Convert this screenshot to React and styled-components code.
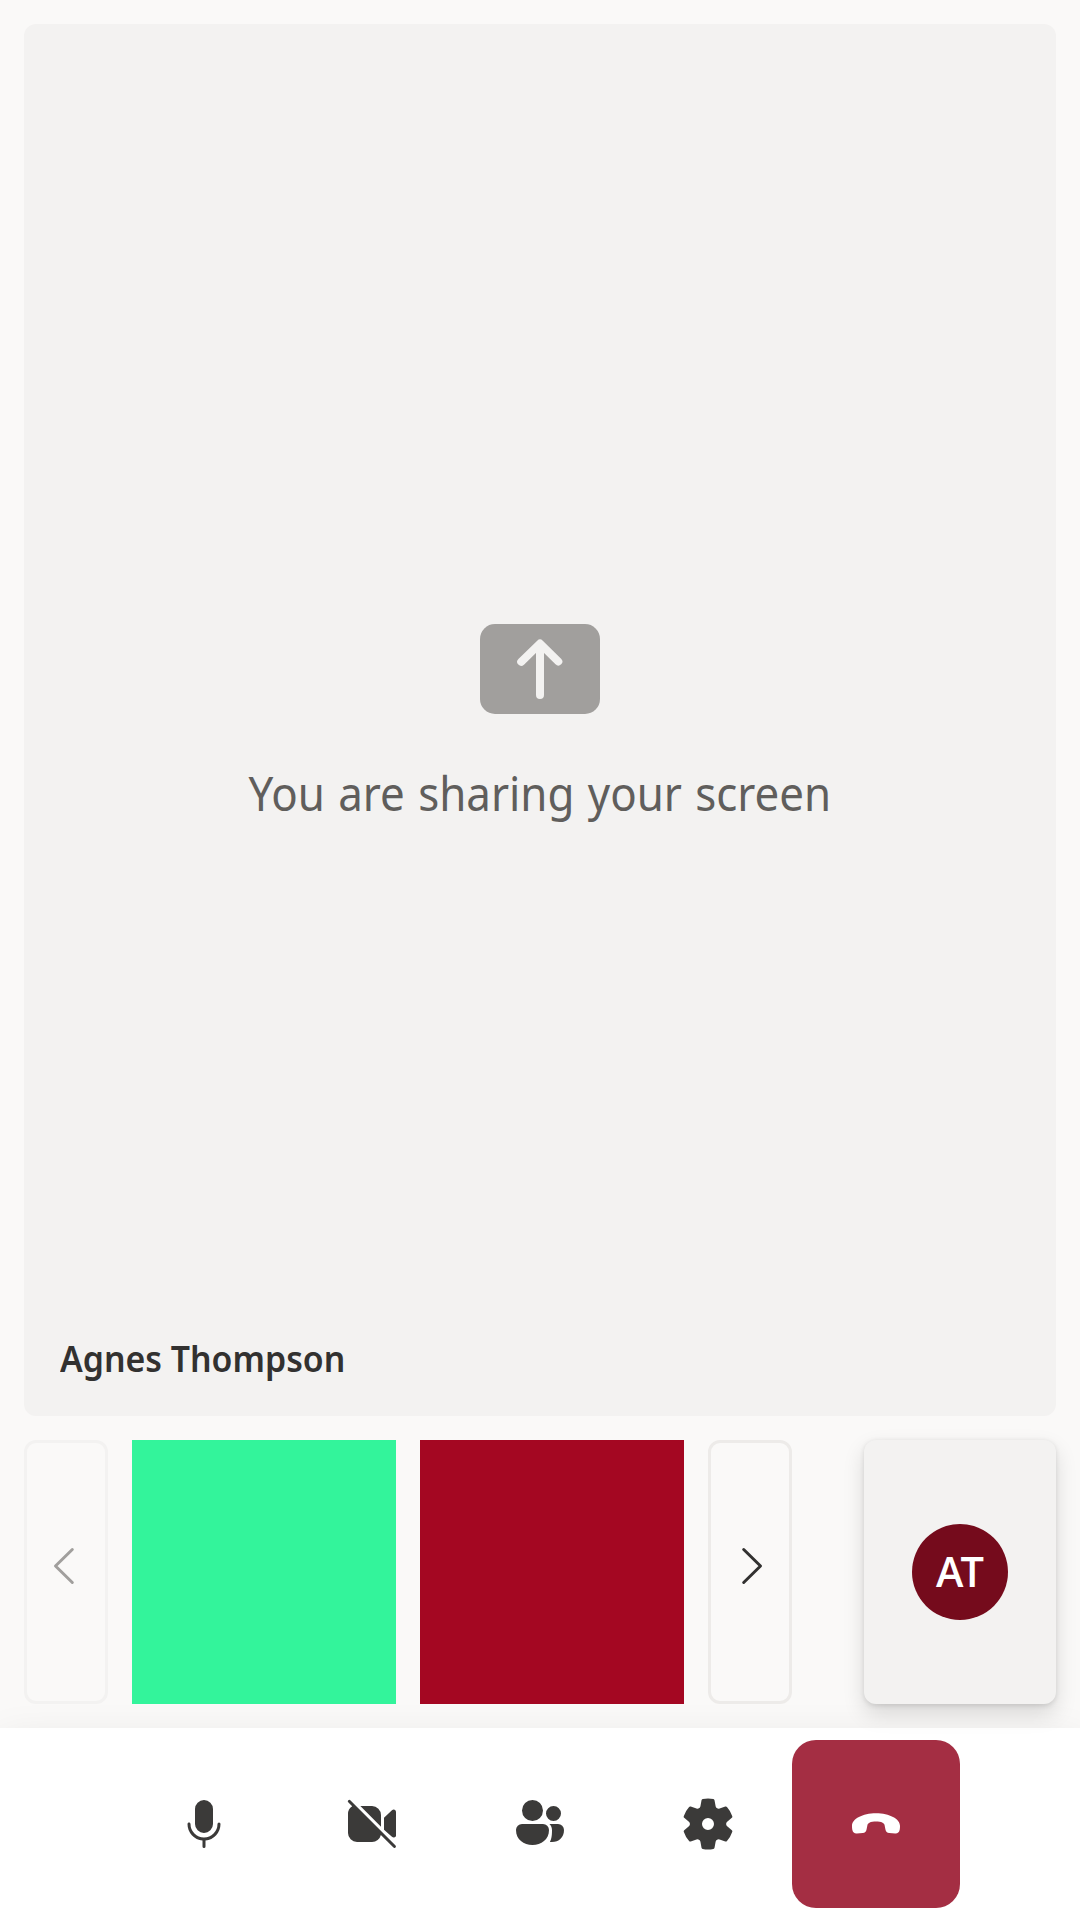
import React from "react";
import styled, { createGlobalStyle } from "styled-components";

const GlobalStyle = createGlobalStyle`
  *, *::before, *::after { box-sizing: border-box; }
  body {
    margin: 0;
    background: #faf9f8;
    font-family: "Noto Sans", "Open Sans", sans-serif;
  }
`;

const Screen = styled.main`
  width: 1080px;
  height: 1920px;
  display: flex;
  flex-direction: column;
  overflow: hidden;
  background: #faf9f8;
`;

const Content = styled.section`
  flex: 1;
  min-height: 0;
  padding: 24px;
  display: flex;
  flex-direction: column;
  gap: 24px;
`;

const Stage = styled.div`
  flex: 1;
  display: grid;
  grid-template-rows: 1fr auto;
  border-radius: 12px;
  background: #f3f2f1;
`;

const ShareNotice = styled.div`
  display: flex;
  flex-direction: column;
  align-items: center;
  padding-top: 600px;
  gap: 47px;
`;

const ShareIcon = styled.svg`
  display: block;
  width: 120px;
  height: 90px;
`;

const ShareText = styled.p`
  margin: 0;
  font-size: 47px;
  line-height: 64px;
  word-spacing: 2px;
  white-space: nowrap;
  color: #605e5c;
  transform: scaleX(0.934);
`;

const DisplayName = styled.div`
  justify-self: start;
  margin: 0 36px 34px;
  font-size: 35.5px;
  font-weight: 600;
  line-height: 48px;
  color: #323130;
  transform: scaleX(0.953);
  transform-origin: left;
`;

const Strip = styled.div`
  height: 264px;
  display: flex;
  justify-content: space-between;
`;

const Gallery = styled.div`
  display: flex;
  gap: 24px;
`;

const PageButton = styled.button`
  width: 84px;
  padding: 0 0 12px;
  display: flex;
  align-items: center;
  justify-content: center;
  border: 3px solid ${(p) => (p.disabled ? "#f3f2f1" : "#edebe9")};
  border-radius: 12px;
  background: #faf9f8;
  color: ${(p) => (p.disabled ? "#a19f9d" : "#323130")};
`;

const VideoTile = styled.div`
  width: 264px;
  background: ${(p) => p.$color};
`;

const LocalTile = styled.div`
  position: relative;
  z-index: 1;
  width: 192px;
  display: flex;
  align-items: center;
  justify-content: center;
  border-radius: 12px;
  background: #f3f2f1;
  box-shadow: 0 9.6px 21.6px rgba(0, 0, 0, 0.132), 0 1.8px 5.4px rgba(0, 0, 0, 0.108);
`;

const Avatar = styled.div`
  width: 96px;
  height: 96px;
  padding-bottom: 1px;
  display: flex;
  align-items: center;
  justify-content: center;
  border-radius: 50%;
  background: #750b1c;
  color: #fff;
  font-family: "Open Sans", "Noto Sans", sans-serif;
  font-size: 41.5px;
  font-weight: 580;
  line-height: 1;
  letter-spacing: -3px;
  text-indent: -3px;
`;

const ControlBar = styled.nav`
  height: 192px;
  padding: 12px 0;
  display: flex;
  justify-content: center;
  background: #fff;
  box-shadow: 0 19.2px 43.2px rgba(0, 0, 0, 0.132);
`;

const ControlButton = styled.button`
  width: 168px;
  height: 168px;
  padding: 0;
  display: flex;
  align-items: center;
  justify-content: center;
  border: 0;
  border-radius: 24px;
  background: ${(p) => (p.$danger ? "#a42e43" : "transparent")};
  color: ${(p) => (p.$danger ? "#fff" : "#3b3a39")};
`;

const Glyph = styled.svg`
  display: block;
  flex: none;
  width: 60px;
  height: 60px;
`;

const icons = {
  mic: "M10 13a3 3 0 0 0 3-3V5a3 3 0 0 0-6 0v5a3 3 0 0 0 3 3Zm-5-3.5c.28 0 .5.22.5.5a4.5 4.5 0 1 0 9 0 .5.5 0 0 1 1 0 5.5 5.5 0 0 1-5 5.48v2.02a.5.5 0 0 1-1 0v-2.02A5.5 5.5 0 0 1 4.5 10c0-.28.22-.5.5-.5Z",
  cameraOff:
    "M2.85 2.15a.5.5 0 1 0-.7.7l1.26 1.26A3 3 0 0 0 2 6.7v6.3a3 3 0 0 0 3 3h5a3 3 0 0 0 2.95-2.34l4.2 4.2a.5.5 0 0 0 .7-.71l-15-15ZM13 10.88V7a3 3 0 0 0-3-3H6.12L13 10.88ZM14 11.88l2.55 2.3c.6.5 1.45.35 1.45-.35V6c0-.7-.75-1.1-1.35-.55L14 7.9v3.98Z",
  people:
    "M11 5.5a3.5 3.5 0 1 1-7 0 3.5 3.5 0 0 1 7 0Zm6 1a2.5 2.5 0 1 1-5 0 2.5 2.5 0 0 1 5 0ZM4 10a2 2 0 0 0-2 2c0 3.2 2.6 5 5.5 5s5.5-1.8 5.5-5a2 2 0 0 0-2-2H4Zm9.3 6c.45-.8.7-1.8.7-3.9 0-.8-.3-1.55-.85-2.1H16a2 2 0 0 1 2 2c0 2.5-1.7 4-4 4h-.7Z",
  settings:
    "M1.91 7.38A8.5 8.5 0 0 1 3.7 4.3a.5.5 0 0 1 .54-.13l1.92.68a1 1 0 0 0 1.32-.76l.36-2a.5.5 0 0 1 .4-.4 8.53 8.53 0 0 1 3.55 0c.2.04.35.2.38.4l.37 2a1 1 0 0 0 1.32.76l1.92-.68a.5.5 0 0 1 .54.13 8.5 8.5 0 0 1 1.78 3.08c.06.2 0 .4-.15.54l-1.56 1.32a1 1 0 0 0 0 1.52l1.56 1.32a.5.5 0 0 1 .15.54 8.5 8.5 0 0 1-1.78 3.08.5.5 0 0 1-.54.13l-1.92-.68a1 1 0 0 0-1.32.76l-.37 2a.5.5 0 0 1-.38.4 8.53 8.53 0 0 1-3.56 0 .5.5 0 0 1-.39-.4l-.36-2a1 1 0 0 0-1.32-.76l-1.92.68a.5.5 0 0 1-.54-.13 8.5 8.5 0 0 1-1.78-3.08.5.5 0 0 1 .15-.54l1.56-1.32a1 1 0 0 0 0-1.52L2.06 7.92a.5.5 0 0 1-.15-.54ZM8 10a2 2 0 1 0 4 0 2 2 0 0 0-4 0Z",
  endCall:
    "M10 6.4c4.5 0 8 1.9 8 4.2 0 .5 0 .9-.1 1.3-.2.9-.7 1.3-1.5 1.25l-2-.15c-.7-.1-1.1-.5-1.25-1.2l-.3-1.45c-.1-.4-.3-.65-.65-.8-.6-.25-1.4-.35-2.2-.35s-1.6.1-2.2.35c-.35.15-.55.4-.65.8l-.3 1.45c-.15.7-.55 1.1-1.25 1.2l-2 .15c-.8.05-1.3-.35-1.5-1.25-.1-.4-.1-.8-.1-1.3 0-2.3 3.5-4.2 8-4.2Z",
};

const Icon = ({ name }) => (
  <Glyph viewBox="0 0 20 20" fill="currentColor" aria-hidden="true">
    <path d={icons[name]} />
  </Glyph>
);

const Chevron = ({ d }) => (
  <Glyph viewBox="0 0 20 20" fill="none" stroke="currentColor" strokeLinecap="round" strokeLinejoin="round" aria-hidden="true">
    <path d={d} />
  </Glyph>
);

const controls = [
  { name: "mic", label: "Mute" },
  { name: "cameraOff", label: "Turn on camera" },
  { name: "people", label: "People" },
  { name: "settings", label: "Devices" },
  { name: "endCall", label: "Leave", danger: true },
];

export default function App() {
  return (
    <Screen>
      <GlobalStyle />
      <Content>
        <Stage>
          <ShareNotice>
            <ShareIcon viewBox="0 0 120 90" aria-hidden="true">
              <rect width="120" height="90" rx="15" fill="#a19f9d" />
              <path d="M60 71V20M41.2 37.8 60 19.5l18.3 18" fill="none" stroke="#f3f2f1" strokeWidth="8" strokeLinecap="round" strokeLinejoin="round" />
            </ShareIcon>
            <ShareText>You are sharing your screen</ShareText>
          </ShareNotice>
          <DisplayName>Agnes Thompson</DisplayName>
        </Stage>
        <Strip>
          <Gallery>
            <PageButton disabled aria-label="Previous">
              <Chevron d="M12.1 4.5 6.5 10l5.6 5.5" />
            </PageButton>
            <VideoTile $color="#33f49b" />
            <VideoTile $color="#a40722" />
            <PageButton aria-label="Next">
              <Chevron d="M7.9 4.5 13.5 10l-5.6 5.5" />
            </PageButton>
          </Gallery>
          <LocalTile>
            <Avatar>AT</Avatar>
          </LocalTile>
        </Strip>
      </Content>
      <ControlBar>
        {controls.map((c) => (
          <ControlButton key={c.name} $danger={c.danger} aria-label={c.label}>
            <Icon name={c.name} />
          </ControlButton>
        ))}
      </ControlBar>
    </Screen>
  );
}
